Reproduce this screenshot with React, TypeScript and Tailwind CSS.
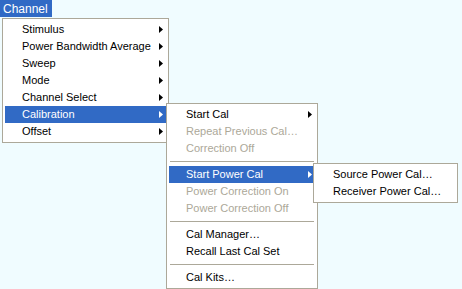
import React from "react";

type Item =
  | { kind: "item"; label: string; sub?: boolean; active?: boolean; disabled?: boolean }
  | { kind: "sep" };

const channelItems: Item[] = [
  { kind: "item", label: "Stimulus", sub: true },
  { kind: "item", label: "Power Bandwidth Average", sub: true },
  { kind: "item", label: "Sweep", sub: true },
  { kind: "item", label: "Mode", sub: true },
  { kind: "item", label: "Channel Select", sub: true },
  { kind: "item", label: "Calibration", sub: true, active: true },
  { kind: "item", label: "Offset", sub: true },
];

const calItems: Item[] = [
  { kind: "item", label: "Start Cal", sub: true },
  { kind: "item", label: "Repeat Previous Cal…", disabled: true },
  { kind: "item", label: "Correction Off", disabled: true },
  { kind: "sep" },
  { kind: "item", label: "Start Power Cal", sub: true, active: true },
  { kind: "item", label: "Power Correction On", disabled: true },
  { kind: "item", label: "Power Correction Off", disabled: true },
  { kind: "sep" },
  { kind: "item", label: "Cal Manager…" },
  { kind: "item", label: "Recall Last Cal Set" },
  { kind: "sep" },
  { kind: "item", label: "Cal Kits…" },
];

const powerItems: Item[] = [
  { kind: "item", label: "Source Power Cal…" },
  { kind: "item", label: "Receiver Power Cal…" },
];

function Arrow({ white }: { white?: boolean }) {
  return (
    <svg width="4" height="7" viewBox="0 0 4 7" className="shrink-0">
      <path d="M0 0 L4 3.5 L0 7 Z" fill={white ? "#ffffff" : "#000000"} />
    </svg>
  );
}

function Menu({ items, className }: { items: Item[]; className: string }) {
  return (
    <div className={`absolute border border-[#aca899] bg-white p-[2px] ${className}`}>
      {items.map((it, i) =>
        it.kind === "sep" ? (
          <div key={i} className="flex h-[9px] items-center px-[1px]">
            <div className="h-px w-full bg-[#aca899]" />
          </div>
        ) : (
          <div
            key={i}
            className={`flex h-[17px] items-center justify-between pl-[17px] pr-[3px] ${
              it.active
                ? "bg-[#316ac5] text-white"
                : it.disabled
                  ? "text-[#aca899]"
                  : "text-black"
            }`}
          >
            <span className="whitespace-nowrap">{it.label}</span>
            {it.sub && <Arrow white={it.active} />}
          </div>
        ),
      )}
    </div>
  );
}

export default function App() {
  return (
    <div
      className="relative h-[289px] w-[462px] overflow-hidden bg-[#f0fcff] text-[11px] leading-none"
      style={{ fontFamily: '"Liberation Sans", Arial, sans-serif' }}
    >
      <div className="flex h-[17px] w-[52px] items-center bg-[#316ac5] pl-[3px] text-[12px] text-white">
        Channel
      </div>
      <Menu items={channelItems} className="left-[2px] top-[18px] w-[167px]" />
      <Menu items={calItems} className="left-[166px] top-[103px] w-[152px]" />
      <Menu items={powerItems} className="left-[313px] top-[163px] w-[145px]" />
    </div>
  );
}
